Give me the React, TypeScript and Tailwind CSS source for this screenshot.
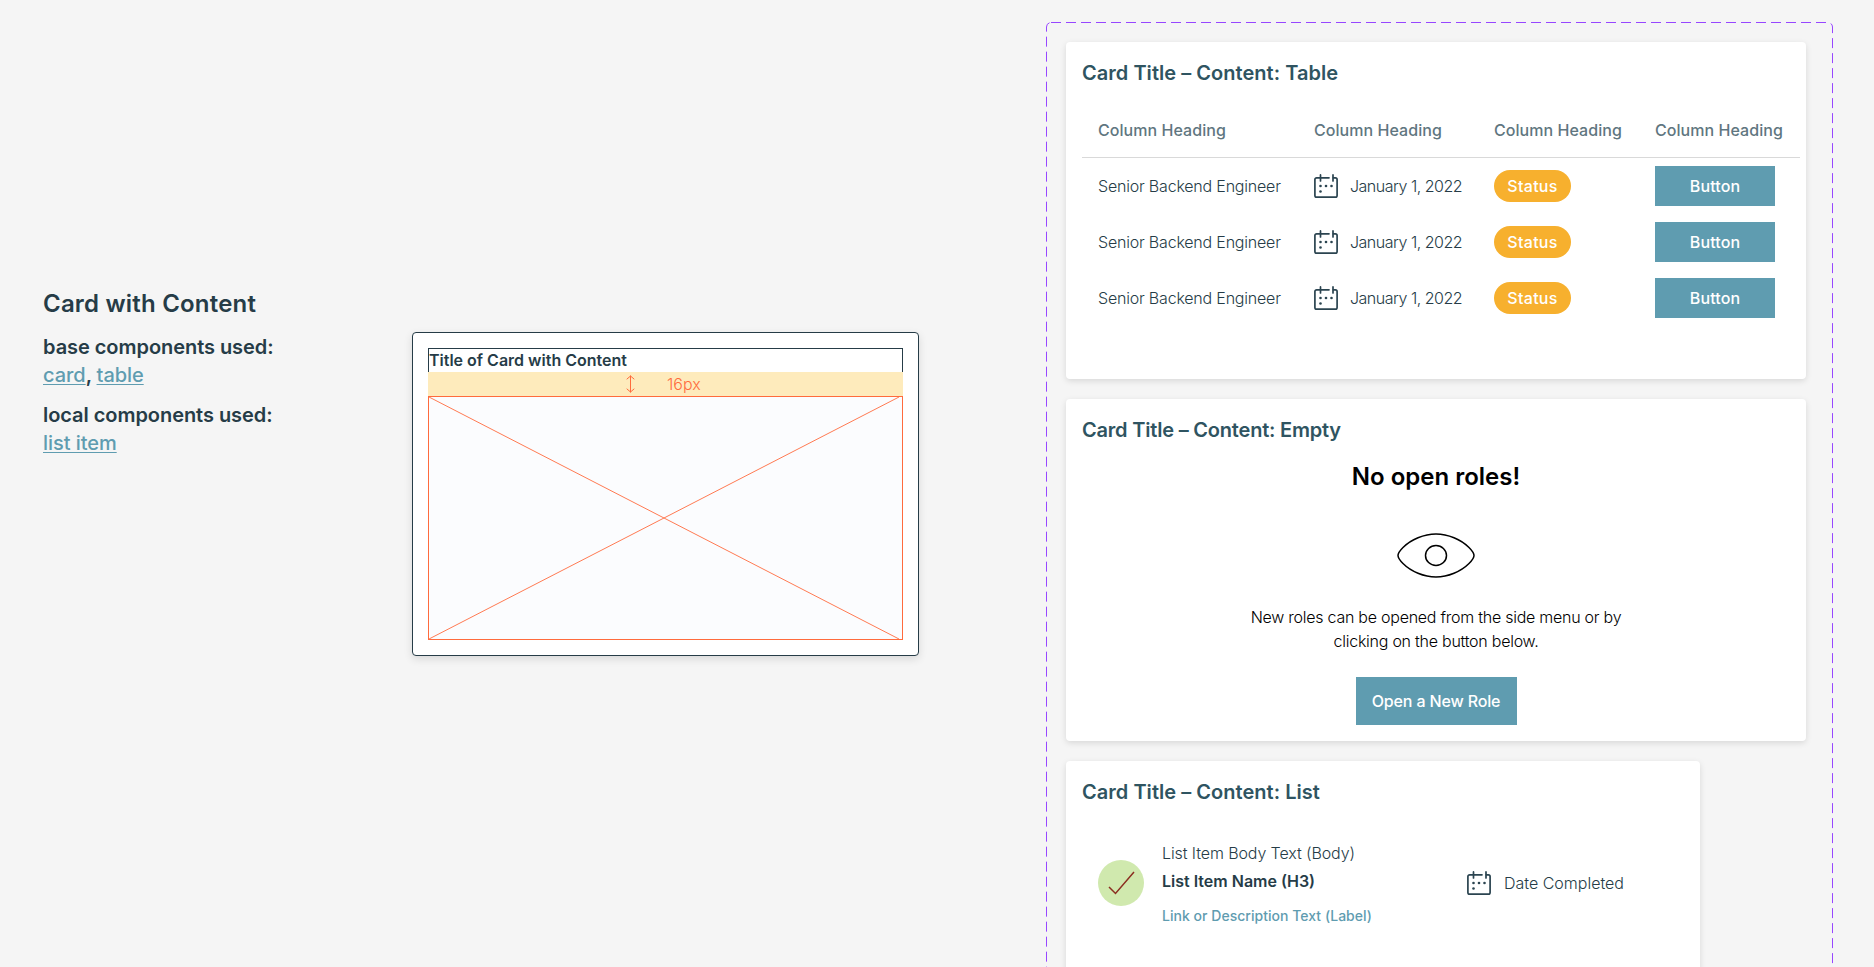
const semi = "[font-weight:550]";

const CalendarIcon = () => (
  <svg width="24" height="24" viewBox="0 0 24 24" fill="none" stroke="#2B4450" strokeWidth="1.7" strokeLinecap="round" className="shrink-0">
    <path d="M6.5 3.8H2.6A1.7 1.7 0 0 0 0.9 5.5V21.4a1.7 1.7 0 0 0 1.7 1.7h18.8a1.7 1.7 0 0 0 1.7-1.7V5.5a1.7 1.7 0 0 0-1.7-1.7h-2" />
    <path d="M6.5 0.9v6M19 0.9v6M6.5 3.8H15" />
    <circle cx="6.5" cy="12" r="1.3" fill="#2B4450" stroke="none" />
    <circle cx="12" cy="12" r="1.3" fill="#2B4450" stroke="none" />
    <circle cx="17.5" cy="12" r="1.3" fill="#2B4450" stroke="none" />
    <circle cx="6.5" cy="17.5" r="1.3" fill="#2B4450" stroke="none" />
  </svg>
);

const CardTitle = ({ children, tight }: { children: string; tight?: boolean }) => (
  <h2 className={tight ? "text-[20px] leading-[30px] font-semibold tracking-[-0.2px] text-[#2F5461]" : "text-[20px] leading-[30px] font-semibold tracking-[0.03px] text-[#2F5461]"}>
    {children}
  </h2>
);

const Wireframe = () => (
  <div className="mt-[332px] h-[324px] w-[507px] shrink-0 rounded border border-[#263C47] bg-white px-[15px] pt-[15px] shadow-[0_3px_8px_rgba(0,0,0,0.12)]">
    <div className="h-6 border-x border-t border-[#263C47] text-[16px] leading-[22px] font-semibold text-[#263C47]">
      Title of Card with Content
    </div>
    <div className="flex h-6 items-center bg-[#FEEBBC] pl-[198px] text-[#FF6B3D]">
      <svg width="9" height="18" viewBox="0 0 9 18" fill="none" stroke="#FF6B3D" strokeWidth="1" strokeLinecap="round" strokeLinejoin="round">
        <path d="M4.5 1v16M1 4l3.5-3L8 4M1 14l3.5 3L8 14" />
      </svg>
      <span className="ml-[32px] text-[16px] font-light text-[#FF6B3D]">16px</span>
    </div>
    <div className="h-[244px] border border-[#FF6B3D] bg-[#FBFCFE]">
      <svg width="473" height="242" viewBox="0 0 473 242" fill="none" stroke="#FF7A52" strokeWidth="1">
        <path d="M0 0L470 242M470 0L0 242" />
      </svg>
    </div>
  </div>
);

const rows = [1, 2, 3];

const TableCard = () => (
  <section className="h-[337px] w-[740px] rounded bg-white p-4 shadow-[0_2px_6px_rgba(0,0,0,0.12)]">
    <CardTitle>Card Title – Content: Table</CardTitle>
    <table className="mt-[15px] w-[718px] table-fixed border-separate border-spacing-0 text-left">
      <thead>
        <tr className="h-[55px] text-[16px] text-[#5F7680]">
          <th className={`w-[216px] border-b border-[#D9D9D9] pl-4 ${semi} tracking-[0.05px]`}>Column Heading</th>
          <th className={`w-[180px] border-b border-[#D9D9D9] pl-4 ${semi} tracking-[0.05px]`}>Column Heading</th>
          <th className={`w-[161px] border-b border-[#D9D9D9] pl-4 ${semi} tracking-[0.05px]`}>Column Heading</th>
          <th className={`w-[161px] border-b border-[#D9D9D9] pl-4 ${semi} tracking-[0.05px]`}>Column Heading</th>
        </tr>
      </thead>
      <tbody>
        {rows.map((r) => (
          <tr key={r} className="h-14 text-[16px] font-light tracking-[-0.2px] text-[#263C47]">
            <td className="pl-4">Senior Backend Engineer</td>
            <td className="pl-4">
              <div className="flex items-center gap-3">
                <CalendarIcon />
                <span className="tracking-[-0.5px]">January 1, 2022</span>
              </div>
            </td>
            <td className="pl-4">
              <span className={`flex h-8 w-[77px] items-center justify-center rounded-2xl bg-[#F7B02E] ${semi} tracking-[0.3px] text-white`}>
                Status
              </span>
            </td>
            <td className="pl-4">
              <button className={`h-10 w-[120px] bg-[#5F9CB0] ${semi} tracking-[0.1px] text-white`}>Button</button>
            </td>
          </tr>
        ))}
      </tbody>
    </table>
  </section>
);

const EmptyCard = () => (
  <section className="w-[740px] rounded bg-white p-4 shadow-[0_2px_6px_rgba(0,0,0,0.12)]">
    <CardTitle tight>Card Title – Content: Empty</CardTitle>
    <div className="flex flex-col items-center">
      <h3 className="mt-4 text-[24px] leading-8 font-semibold text-black">No open roles!</h3>
      <svg width="78" height="45" viewBox="0 0 78 45" fill="none" stroke="#000" strokeWidth="1.5" className="mt-10">
        <path d="M1 22.5C1 20 3 17.5 6 14.5C14 6.5 27 1 39 1C51 1 64 6.5 72 14.5C75 17.5 77 20 77 22.5C77 25 75 27.5 72 30.5C64 38.5 51 44 39 44C27 44 14 38.5 6 30.5C3 27.5 1 25 1 22.5Z" />
        <ellipse cx="39" cy="22.5" rx="10.5" ry="10" />
      </svg>
      <p className="mt-[27px] w-[400px] text-center text-[16px] leading-6 font-light tracking-[-0.25px] text-black">
        New roles can be opened from the side menu or by clicking on the button below.
      </p>
      <button className={`mt-6 h-12 w-[161px] bg-[#5F9CB0] text-[16px] ${semi} tracking-[-0.15px] text-white`}>
        Open a New Role
      </button>
    </div>
  </section>
);

const ListCard = () => (
  <section className="h-[260px] w-[634px] rounded bg-white p-4 shadow-[0_2px_6px_rgba(0,0,0,0.12)]">
    <CardTitle>Card Title – Content: List</CardTitle>
    <div className="mt-[34px] flex items-center pl-4">
      <div className="mb-[2px] size-[46px] shrink-0 rounded-full bg-[#D0E9AE]">
        <svg width="46" height="46" viewBox="0 0 46 46" fill="none" stroke="#8B2E20" strokeWidth="1.5">
          <path d="M11 27l6.5 6.5L36 12" />
        </svg>
      </div>
      <div className="ml-[18px] w-[305px]">
        <p className="text-[16px] leading-6 font-light tracking-[-0.1px] text-[#263C47]">List Item Body Text (Body)</p>
        <p className="mt-1 text-[16px] leading-6 font-semibold text-[#263C47]">List Item Name (H3)</p>
        <p className={`mt-[13px] text-[14px] leading-5 ${semi} tracking-[0.03px] text-[#5F9CB0]`}>Link or Description Text (Label)</p>
      </div>
      <div className="mb-[2px] flex items-center gap-[13px] text-[16px] font-light text-[#263C47]">
        <CalendarIcon />
        <span>Date Completed</span>
      </div>
    </div>
  </section>
);

export default function App() {
  return (
    <div className="flex h-screen overflow-hidden bg-[#F5F5F5] [font-family:Inter,sans-serif]">
      <aside className="w-[412px] shrink-0 pt-[288px] pl-[43px] text-[#263C47]">
        <h1 className="text-[24px] leading-8 font-semibold tracking-[0.2px]">Card with Content</h1>
        <p className="mt-[13px] text-[20px] leading-7 font-semibold tracking-[-0.05px]">base components used:</p>
        <p className="text-[20px] leading-7 font-semibold tracking-[-0.05px]">
          <a className="font-medium text-[#5F9CB0] underline decoration-1 underline-offset-2">card</a>, <a className="font-medium text-[#5F9CB0] underline decoration-1 underline-offset-2">table</a>
        </p>
        <p className="mt-3 text-[20px] leading-7 font-semibold tracking-[-0.05px]">local components used:</p>
        <p className="text-[20px] leading-7 font-semibold tracking-[-0.05px]">
          <a className="font-medium text-[#5F9CB0] underline decoration-1 underline-offset-2">list item</a>
        </p>
      </aside>

      <Wireframe />

      <main className="relative mt-[22px] ml-[127px] flex h-[1100px] w-[787px] shrink-0 flex-col gap-5 pt-5 pl-5">
        <svg width="787" height="1100" className="pointer-events-none absolute top-0 left-0" fill="none" stroke="#9747FF" strokeWidth="1" strokeDasharray="10 5">
          <rect x="0.5" y="0.5" width="786" height="1099" rx="4.5" />
        </svg>
        <TableCard />
        <EmptyCard />
        <ListCard />
      </main>
    </div>
  );
}
